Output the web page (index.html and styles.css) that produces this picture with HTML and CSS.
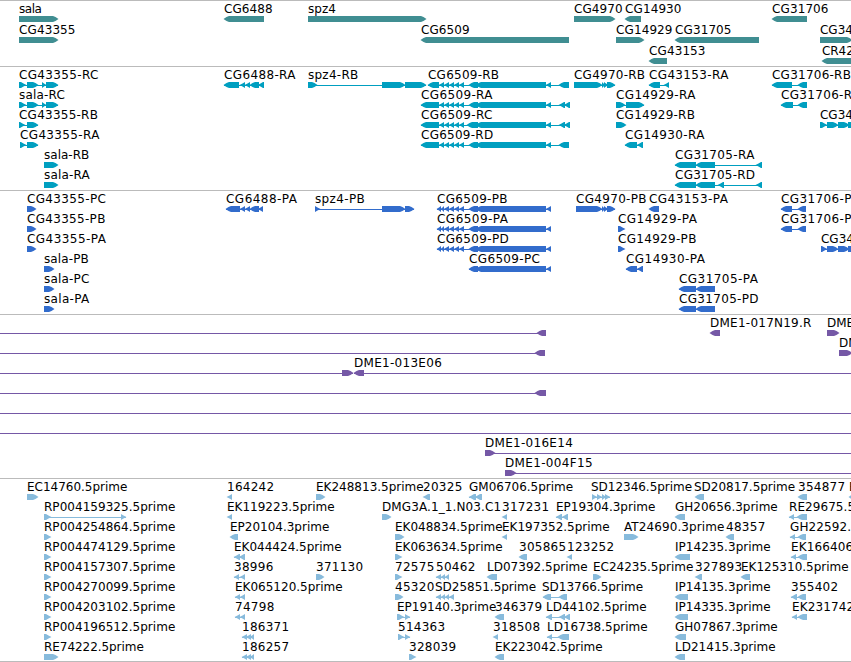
FILE: index.html
```html
<!DOCTYPE html>
<html lang="en">
<head>
<meta charset="utf-8">
<title>Genome tracks</title>
<link rel="stylesheet" href="styles.css">
</head>
<body>
<main class="browser">
  <section class="track genes"><svg class="lane" data-track="genes"></svg></section>
  <section class="track transcripts"><svg class="lane" data-track="transcripts"></svg></section>
  <section class="track proteins"><svg class="lane" data-track="proteins"></svg></section>
  <section class="track clones"><svg class="lane" data-track="clones"></svg></section>
  <section class="track ests"><svg class="lane" data-track="ests"></svg></section>
</main>
<script src="tracks.js"></script>
</body>
</html>
```
FILE: styles.css
```css
body {
  margin: 0;
  background: #fff;
}

.browser {
  display: flex;
  flex-direction: column;
  width: 851px;
  height: 662px;
  box-sizing: border-box;
  overflow: hidden;
  border-bottom: 1px solid #bbb;
}

.track {
  box-sizing: border-box;
  flex: none;
  border-top: 1px solid #bbb;
}

.genes { height: 66px; color: #408e92; }
.transcripts { height: 124px; color: #009fc0; }
.proteins { height: 124px; color: #326ccc; }
.clones { height: 164px; color: #7558a6; }
.ests { height: 183px; color: #88bbdc; }

.lane {
  display: block;
  width: 100%;
  height: 100%;
  overflow: hidden;
}

.label {
  fill: #000;
  font-family: "DejaVu Sans", sans-serif;
  font-size: 12px;
  white-space: pre;
}

.glyph { fill: currentColor; }
```
FILE: tracks.js
```js
// Each feature: [row, label, label x, strand, segments as "start-end" pairs]
// A connector line is drawn from the first to the last segment.
const cgTail = '439-444 444-449 449-454 454-459 459-464 469-478 476-546 546-551';
const cgProt = '437-441 441-444 444-449 449-454 454-459 459-464 469-478 476-546 546-551';

const tracks = {
  genes: { step: 21, items: [
    [0, 'sala', 19, 'R', '19-58'],
    [0, 'CG6488', 224, 'L', '224-264'],
    [0, 'spz4', 308, 'R', '308-426'],
    [0, 'CG4970', 574, 'R', '574-615'],
    [0, 'CG14930', 625, 'L', '625-641'],
    [0, 'CG31706', 772, 'L', '772-807'],
    [1, 'CG43355', 19, 'R', '19-58'],
    [1, 'CG6509', 421, 'L', '421-569'],
    [1, 'CG14929', 616, 'R', '616-644'],
    [1, 'CG31705', 675, 'L', '675-759'],
    [1, 'CG34', 820, 'R', '820-852'],
    [2, 'CG43153', 649, 'L', '649-667'],
    [2, 'CR42', 822, 'L', '822-870']
  ]},
  transcripts: { step: 20, items: [
    [0, 'CG43355-RC', 19, 'R', '19-26 27-38 42-46 46-58'],
    [0, 'CG6488-RA', 224, 'L', '224-239 240-245 245-250 250-259 258-264'],
    [0, 'spz4-RB', 308, 'R', '308-317 382-405 405-426'],
    [0, 'CG6509-RB', 428, 'L', '428-439 ' + cgTail + ' 559-569'],
    [0, 'CG4970-RB', 574, 'R', '574-602 602-605 604-608 607-615'],
    [0, 'CG43153-RA', 649, 'L', '649-660 664-669'],
    [0, 'CG31706-RB', 772, 'L', '772-792 798-807'],
    [1, 'sala-RC', 19, 'R', '19-26 27-38 42-46 46-58'],
    [1, 'CG6509-RA', 421, 'L', '421-439 ' + cgTail + ' 559-565 564-570'],
    [1, 'CG14929-RA', 616, 'R', '616-625 626-644'],
    [1, 'CG31706-R', 781, 'L', '781-793 798-807'],
    [2, 'CG43355-RB', 19, 'R', '19-25 27-38'],
    [2, 'CG6509-RC', 421, 'L', '421-439 ' + cgTail.replace('469-', '467-') + ' 559-565 564-570'],
    [2, 'CG14929-RB', 616, 'R', '616-626'],
    [2, 'CG34', 820, 'R', '820-827 827-838 838-849 848-858'],
    [3, 'CG43355-RA', 20, 'R', '20-26 27-38'],
    [3, 'CG6509-RD', 421, 'L', '421-439 ' + cgTail + ' 559-569'],
    [3, 'CG14930-RA', 625, 'L', '625-637 637-643'],
    [4, 'sala-RB', 44, 'R', '44-58'],
    [4, 'CG31705-RA', 675, 'L', '675-696 696-715 756-762'],
    [5, 'sala-RA', 44, 'R', '44-58'],
    [5, 'CG31705-RD', 675, 'L', '675-696 696-715 718-724 756-762']
  ]},
  proteins: { step: 20, items: [
    [0, 'CG43355-PC', 27, 'R', '27-36'],
    [0, 'CG6488-PA', 226, 'L', '226-240 240-245 245-250 250-259 258-263'],
    [0, 'spz4-PB', 315, 'R', '315-320 382-405 405-414'],
    [0, 'CG6509-PB', 437, 'L', cgProt],
    [0, 'CG4970-PB', 576, 'R', '576-602 602-605 604-608 607-615'],
    [0, 'CG43153-PA', 649, 'L', '649-659'],
    [0, 'CG31706-P', 781, 'L', '781-792 798-806'],
    [1, 'CG43355-PB', 27, 'R', '27-36'],
    [1, 'CG6509-PA', 437, 'L', cgProt],
    [1, 'CG14929-PA', 618, 'R', '618-625'],
    [1, 'CG31706-P', 781, 'L', '781-792 798-806'],
    [2, 'CG43355-PA', 27, 'R', '27-36'],
    [2, 'CG6509-PD', 437, 'L', cgProt],
    [2, 'CG14929-PB', 618, 'R', '618-625'],
    [2, 'CG34', 821, 'R', '821-827 827-838 838-849 848-858'],
    [3, 'sala-PB', 44, 'R', '44-54'],
    [3, 'CG6509-PC', 469, 'L', '469-478 476-546 546-551'],
    [3, 'CG14930-PA', 626, 'L', '626-637 637-643'],
    [4, 'sala-PC', 44, 'R', '44-54'],
    [4, 'CG31705-PA', 679, 'L', '679-696 696-715'],
    [5, 'sala-PA', 44, 'R', '44-54'],
    [5, 'CG31705-PD', 679, 'L', '679-696 696-715']
  ]},
  clones: { step: 20, items: [
    [0, '', 0, 'L', '-20--10 537-546'],
    [0, 'DME1-017N19.R', 710, 'L', '710-720'],
    [0, 'DME1', 827, 'R', '827-839'],
    [1, '', 0, 'L', '-20--10 535-545'],
    [1, 'DME1', 839, 'R', '839-852'],
    [2, '', 0, 'R', '-20--10 342-353'],
    [2, 'DME1-013E06', 354, 'L', '354-364 870-880'],
    [3, '', 0, 'L', '-20--10 535-546'],
    [4, '', 0, 'L', '-20--10 870-880'],
    [5, '', 0, 'L', '-20--10 870-880'],
    [6, 'DME1-016E14', 485, 'R', '485-495 870-880'],
    [7, 'DME1-004F15', 505, 'R', '505-516 870-880']
  ]},
  ests: { step: 20, items: [
    [0, 'EC14760.5prime', 27, 'R', '27-38'],
    [0, '164242', 227, 'L', '227-232'],
    [0, 'EK248813.5prime', 316, 'R', '316-325'],
    [0, '20325', 423, 'L', '423-430'],
    [0, 'GM06706.5prime', 469, 'L', '469-476 475-482'],
    [0, 'SD12346.5prime', 591, 'R', '592-597 597-602 602-606 605-610'],
    [0, 'SD20817.5prime', 694, 'L', '695-704'],
    [0, '354877', 798, 'L', '798-807'],
    [0, 'E', 849, 'L', '849-858'],
    [1, 'RP004159325.5prime', 44, 'R', '44-51 121-126'],
    [1, 'EK119223.5prime', 227, 'L', '227-232'],
    [1, 'DMG3A.1_1.N03.C1', 382, 'R', '382-391'],
    [1, '317231', 502, 'L', '502-507'],
    [1, 'EP19304.3prime', 556, 'L', '556-562 562-568'],
    [1, 'GH20656.3prime', 675, 'L', '675-685'],
    [1, 'RE29675.5', 789, 'L', '789-794 797-807'],
    [2, 'RP004254864.5prime', 44, 'R', '44-51'],
    [2, 'EP20104.3prime', 230, 'L', '230-238'],
    [2, 'EK048834.5prime', 395, 'R', '395-404'],
    [2, 'EK197352.5prime', 502, 'L', '502-507'],
    [2, 'AT24690.3prime', 624, 'R', '624-638'],
    [2, '48357', 726, 'L', '726-734'],
    [2, 'GH22592.', 790, 'L', '790-795 798-806'],
    [3, 'RP004474129.5prime', 44, 'R', '44-51'],
    [3, 'EK044424.5prime', 234, 'L', '234-240 239-245'],
    [3, 'EK063634.5prime', 395, 'R', '395-402'],
    [3, '305865', 519, 'L', '519-527'],
    [3, '123252', 567, 'L', '567-572'],
    [3, 'IP14235.3prime', 675, 'L', '675-690'],
    [3, 'EK166406', 791, 'L', '791-796 798-807'],
    [4, 'RP004157307.5prime', 44, 'R', '44-51'],
    [4, '38996', 234, 'L', '234-239 240-245'],
    [4, '371130', 316, 'R', '316-324'],
    [4, '72575', 395, 'R', '395-402'],
    [4, '50462', 436, 'L', '436-441 441-445 445-449'],
    [4, 'LD07392.5prime', 487, 'L', '487-497'],
    [4, 'EC24235.5prime', 593, 'R', '593-601'],
    [4, '327893', 695, 'L', '695-702'],
    [4, 'EK125310.5prime', 741, 'L', '741-750'],
    [5, 'RP004270099.5prime', 44, 'R', '44-51'],
    [5, 'EK065120.5prime', 235, 'L', '235-240 240-245'],
    [5, '45320', 395, 'R', '395-403'],
    [5, 'SD25851.5prime', 435, 'L', '436-441 441-445 445-449 449-454'],
    [5, 'SD13766.5prime', 542, 'L', '543-551 559-567'],
    [5, 'IP14135.3prime', 675, 'L', '675-688'],
    [5, '355402', 791, 'L', '791-797 798-806'],
    [6, 'RP004203102.5prime', 44, 'R', '44-51'],
    [6, '74798', 235, 'L', '235-240 240-245'],
    [6, 'EP19140.3prime', 397, 'R', '397-404 405-410'],
    [6, '346379', 495, 'L', '495-504'],
    [6, 'LD44102.5prime', 546, 'L', '546-552 559-565 564-570'],
    [6, 'IP14335.3prime', 675, 'L', '675-688'],
    [6, 'EK231742', 792, 'L', '792-797 798-807'],
    [7, 'RP004196512.5prime', 44, 'R', '44-51'],
    [7, '186371', 242, 'L', '242-247 246-251 250-254'],
    [7, '514363', 398, 'R', '398-404 405-410'],
    [7, '318508', 493, 'L', '493-498'],
    [7, 'LD16738.5prime', 547, 'L', '547-552 558-569'],
    [7, 'GH07867.3prime', 675, 'L', '675-686'],
    [8, 'RE74222.5prime', 44, 'R', '44-58'],
    [8, '186257', 242, 'L', '242-247 246-251 250-254'],
    [8, '328039', 409, 'R', '409-416'],
    [8, 'EK223042.5prime', 495, 'L', '495-504'],
    [8, 'LD21415.3prime', 675, 'L', '675-685']
  ]}
};

const NS = 'http://www.w3.org/2000/svg';
const BAR_TOP = 15;
const HEAD = 5;

// Advance widths of the label characters; anything else is a digit.
const advance = {
  '.': 4, '-': 6.8, _: 6, A: 8.3, B: 7.8, C: 8.3, D: 9, E: 7.2, F: 7, G: 8.9, H: 9, I: 3.6,
  K: 7.8, L: 6.9, M: 10.5, N: 9, P: 7.3, R: 7.8, S: 7.3, T: 7.3,
  a: 6.7, e: 7, i: 3.3, l: 3.3, m: 11, p: 7.4, r: 5, s: 6.2, z: 6.4
};
const labelWidth = text => [...text].reduce((sum, c) => sum + (advance[c] || 7.85), 0);

function add(svg, tag, attrs, text) {
  const el = document.createElementNS(NS, tag);
  for (const key in attrs) el.setAttribute(key, attrs[key]);
  if (text) el.textContent = text;
  svg.appendChild(el);
}

function arrow(a, b, y, strand) {
  const h = Math.min(HEAD, b - a);
  const k = b - a > 7 ? 1 : 1.4;
  return strand === 'R'
    ? `${a},${y} ${b - h},${y} ${b - h / 2},${y + k} ${b + .5},${y + 3} ${b - h / 2},${y + 6 - k} ${b - h},${y + 6} ${a},${y + 6}`
    : `${b},${y} ${a + h},${y} ${a + h / 2},${y + k} ${a - .5},${y + 3} ${a + h / 2},${y + 6 - k} ${a + h},${y + 6} ${b},${y + 6}`;
}

document.querySelectorAll('.lane').forEach(svg => {
  const track = tracks[svg.dataset.track];
  for (const [row, label, x, strand, spec] of track.items) {
    const y = BAR_TOP + row * track.step;
    const segs = spec.split(' ').map(s => s.match(/^(-?\d+)-(-?\d+)$/).slice(1).map(Number));
    const first = segs[0][0];
    const last = segs[segs.length - 1][1];
    if (segs.length > 1) add(svg, 'rect', { class: 'glyph', x: first, y: y + 3, width: last - first, height: 1 });
    for (const [a, b] of segs) add(svg, 'polygon', { class: 'glyph', points: arrow(a, b, y, strand) });
    if (label) add(svg, 'text', { class: 'label', x, y: y - 3, textLength: labelWidth(label).toFixed(1) }, label);
  }
});
```
